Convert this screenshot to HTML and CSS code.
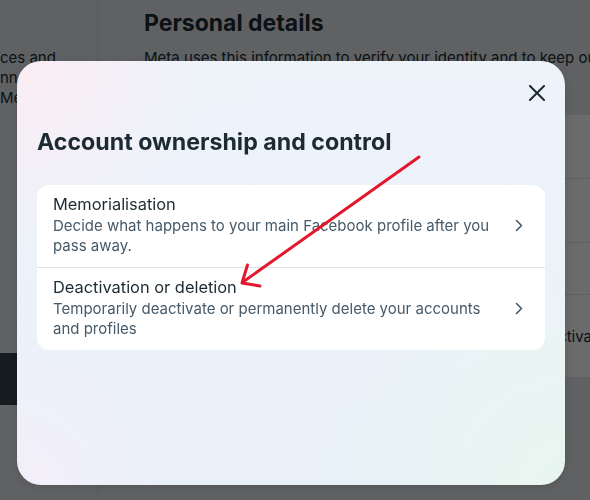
FILE: index.html
```html
<!DOCTYPE html>
<html lang="en">
<head>
<meta charset="utf-8">
<title>Account ownership and control</title>
<link rel="stylesheet" href="styles.css">
</head>
<body>
<div class="page">
  <aside class="sidebar">
    <p class="side-text">ces and<br>nnected<br>Meta</p>
    <div class="side-button"></div>
  </aside>
  <main class="main">
    <h1 class="page-title">Personal details</h1>
    <p class="page-desc">Meta uses this information to verify your identity and to keep our community safe.</p>
    <div class="page-card">
      <div class="page-row"></div>
      <div class="page-row"></div>
      <div class="page-row short"></div>
      <div class="page-row tall"><span>Deactivation</span></div>
    </div>
  </main>
</div>
<div class="overlay"></div>

<div class="modal">
  <div class="modal-top">
    <button class="close" aria-label="Close">
      <svg width="16" height="16" viewBox="0 0 16 16"><path d="M1 1 L15 15 M15 1 L1 15" stroke="#1c2b33" stroke-width="2" stroke-linecap="square" fill="none"/></svg>
    </button>
  </div>
  <h2 class="modal-title">Account ownership and control</h2>
  <div class="list">
    <div class="item">
      <div class="item-text">
        <div class="item-title">Memorialisation</div>
        <div class="item-desc">Decide what happens to your main Facebook profile after you pass away.</div>
      </div>
      <svg class="chev" width="8" height="13" viewBox="0 0 8 13"><path d="M1.5 1.5 L6.5 6.5 L1.5 11.5" stroke="#465a69" stroke-width="1.6" fill="none" stroke-linecap="round" stroke-linejoin="round"/></svg>
    </div>
    <div class="item">
      <div class="item-text">
        <div class="item-title">Deactivation or deletion</div>
        <div class="item-desc">Temporarily deactivate or permanently delete your accounts and profiles</div>
      </div>
      <svg class="chev" width="8" height="13" viewBox="0 0 8 13"><path d="M1.5 1.5 L6.5 6.5 L1.5 11.5" stroke="#465a69" stroke-width="1.6" fill="none" stroke-linecap="round" stroke-linejoin="round"/></svg>
    </div>
  </div>
</div>

<svg class="annotation" width="590" height="500" viewBox="0 0 590 500">
  <path d="M419 157 L243 282" stroke="#e3182d" stroke-width="3" stroke-linecap="round" fill="none"/>
  <path d="M247.5 265 L242 283 L260 286" stroke="#e3182d" stroke-width="3" stroke-linecap="round" stroke-linejoin="round" fill="none"/>
</svg>
</body>
</html>
```

FILE: styles.css
```css
html, body {
  margin: 0;
  padding: 0;
  width: 590px;
  height: 500px;
  overflow: hidden;
  font-family: Inter, "Noto Sans", sans-serif;
}

.page {
  display: flex;
  width: 590px;
  height: 500px;
  background: #e4e8ed;
  overflow: hidden;
}

.sidebar {
  width: 97px;
  flex: none;
  border-right: 1px solid #d2d6db;
  padding-top: 48px;
  display: flex;
  flex-direction: column;
}

.side-text {
  margin: 0;
  font-size: 15px;
  line-height: 20px;
  color: #1c2b33;
  white-space: nowrap;
}

.side-button {
  margin-top: 245px;
  height: 52px;
  width: 80px;
  background: #33404a;
}

.main {
  flex: 1;
  padding-left: 46px;
  padding-top: 8px;
  min-width: 0;
  overflow: hidden;
}

.page-title {
  margin: 0;
  font-size: 23px;
  line-height: 30px;
  font-weight: 700;
  color: #1c2b33;
}

.page-desc {
  margin: 10px 0 0;
  font-size: 15px;
  line-height: 20px;
  color: #1c2b33;
  white-space: nowrap;
}

.page-card {
  margin-top: 47px;
  width: 600px;
  background: #ffffff;
  border-radius: 12px;
}

.page-row {
  height: 63px;
  border-bottom: 1px solid #dde2e8;
}

.page-row.short {
  height: 51px;
}

.page-row.tall {
  height: 82px;
  border-bottom: none;
  display: flex;
  align-items: center;
  padding-left: 386px;
  font-size: 15px;
  color: #1c2b33;
  white-space: nowrap;
}

.overlay {
  position: fixed;
  inset: 0;
  background: rgba(0, 0, 0, 0.58);
}

.modal {
  position: fixed;
  left: 17px;
  top: 61px;
  width: 508px;
  height: 424px;
  padding: 0 20px;
  border-radius: 24px;
  background:
    radial-gradient(circle at 0% 0%, rgba(252, 236, 243, 0.95) 0, rgba(252, 236, 243, 0) 190px),
    radial-gradient(circle at 100% 100%, rgba(232, 246, 238, 0.95) 0, rgba(232, 246, 238, 0) 260px),
    radial-gradient(circle at 0% 100%, rgba(246, 238, 248, 0.8) 0, rgba(246, 238, 248, 0) 160px),
    linear-gradient(180deg, #eef3fa 0%, #eaf1fa 100%);
  box-shadow: 0 2px 12px rgba(0, 0, 0, 0.15);
}

.modal-top {
  display: flex;
  justify-content: flex-end;
  padding-top: 24px;
}

.close {
  width: 16px;
  height: 16px;
  padding: 0;
  border: none;
  background: transparent;
  display: flex;
}

.modal-title {
  margin: 27px 0 0;
  font-size: 23.2px;
  line-height: 28px;
  font-weight: 700;
  color: #1c2b33;
}

.list {
  margin-top: 29px;
  background: #ffffff;
  border-radius: 12px;
}

.item {
  display: flex;
  align-items: center;
  padding: 9px 22px 11px 16px;
}

.item + .item {
  border-top: 1px solid #dbe2ea;
}

.item-text {
  flex: 1;
  min-width: 0;
}

.item-title {
  font-size: 16.4px;
  line-height: 20px;
  margin-bottom: 2px;
  color: #1c2b33;
}

.item-desc {
  font-size: 15px;
  line-height: 20px;
  color: #465a69;
  padding-right: 8px;
}

.chev {
  flex: none;
}

.annotation {
  position: fixed;
  left: 0;
  top: 0;
  pointer-events: none;
}
```
